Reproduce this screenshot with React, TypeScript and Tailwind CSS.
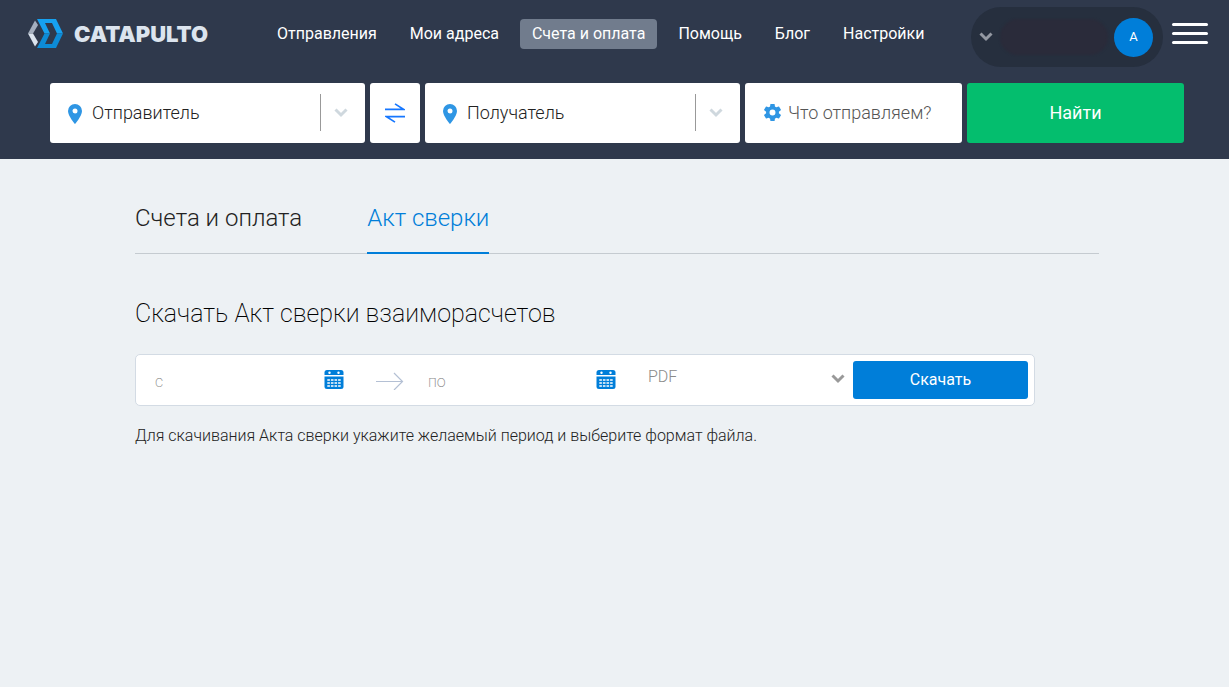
import { useState } from 'react'

type MenuItem = {
    title: string
    active?: boolean
}

const menu: MenuItem[] = [
    { title: 'Отправления' },
    { title: 'Мои адреса' },
    { title: 'Счета и оплата', active: true },
    { title: 'Помощь' },
    { title: 'Блог' },
    { title: 'Настройки' },
]

function Logo() {
    return (
        <a href="#" className="flex w-[237px] shrink-0 items-center gap-[11px] text-[#dce4ee]">
            <svg width="35" height="29" viewBox="0 0 35 29" aria-hidden="true">
                <path d="M7 1.5 L10 6 L5 14.5 L0 14.5 Z" fill="#a5afbe" />
                <path d="M0 14.5 L5 14.5 L10 23 L7 27.5 Z" fill="#dce4ee" />
                <path d="M9 0 H28 L35 14.5 H29 L24 4 H17 L22 14.5 H16.5 Z" fill="#16a1f0" />
                <path d="M35 14.5 L28 29 H9 L16.5 14.5 H22 L17 25 H24 L29 14.5 Z" fill="#0d8bd6" />
            </svg>
            <span className="font-['Inter',sans-serif] text-[22px] leading-6 font-black">CATAPULTO</span>
        </a>
    )
}

function Chevron({ className }: { className: string }) {
    return (
        <svg className={className} width="14" height="10" viewBox="0 0 14 10" fill="none" stroke="currentColor" strokeWidth="3" aria-hidden="true">
            <path d="M1.5 1.5 L7 7 L12.5 1.5" />
        </svg>
    )
}

function Calendar() {
    return (
        <svg width="20" height="20" viewBox="0 0 20 20" aria-hidden="true">
            <path d="M3 0 H17 Q19.5 0 19.5 2.5 V5 H0.5 V2.5 Q0.5 0 3 0 Z" fill="#007ed9" />
            <path d="M0.5 6.5 H19.5 V16.5 Q19.5 19 17 19 H3 Q0.5 19 0.5 16.5 Z" fill="#007ed9" />
            <circle cx="5.5" cy="2.7" r="1.2" fill="#fff" />
            <circle cx="14.5" cy="2.7" r="1.2" fill="#fff" />
            <path d="M3.3 10 H16.7 M3.3 13 H16.7 M3.3 16 H16.7" stroke="#fff" strokeWidth="1.7" strokeDasharray="2.6 1" />
        </svg>
    )
}

function PlaceField({ label }: { label: string }) {
    return (
        <div className="flex min-w-0 items-center rounded-[3px] bg-white pl-[18px]">
            <svg className="mt-px shrink-0" width="14" height="20" viewBox="0 0 14 20" aria-hidden="true">
                <path d="M7 0 A7 7 0 0 0 0 7 C0 12 7 20 7 20 S14 12 14 7 A7 7 0 0 0 7 0 Z M7 4.5 A2.5 2.5 0 1 1 7 9.5 A2.5 2.5 0 0 1 7 4.5 Z" fill="#2f96e4" />
            </svg>
            <input
                aria-label={label}
                placeholder={label}
                className="ml-[10px] h-[58px] min-w-0 flex-1 pb-[2px] text-[18px] font-light text-black outline-none placeholder:text-[#222]"
            />
            <button type="button" aria-label={'Выбрать: ' + label} className="mb-px flex h-[37px] w-[45px] shrink-0 items-center border-l border-[#999] pl-[13px] text-[#cfd8de]">
                <Chevron className="h-[10px] w-[14px]" />
            </button>
        </div>
    )
}

function Header() {
    return (
        <header className="bg-[#2f394c] pb-4 text-white">
            <div className="flex h-[83px] items-start pr-[21px] pl-7">
                <div className="shrink-0 pt-[19px]"><Logo /></div>
                <nav className="flex min-w-0 items-center gap-[9px] pt-[19px]">
                    {menu.map((item) => (
                        <a
                            key={item.title}
                            href="#"
                            className={'h-[30px] rounded-[4px] px-3 text-[16px] leading-[29px] whitespace-nowrap ' + (item.active ? 'bg-[#717c8d]' : '')}
                        >
                            {item.title}
                        </a>
                    ))}
                </nav>
                <button type="button" className="mt-[7px] ml-auto flex h-[60px] w-[192px] shrink-0 items-center justify-between rounded-full bg-[#262f3e] pr-[10px] pl-2">
                    <Chevron className="h-[10px] w-[14px] text-[#9398a2]" />
                    <span className="h-9 w-[108px] rounded-full bg-[#2a2b3a] blur-[1px]" />
                    <span className="flex size-[39px] items-center justify-center rounded-full bg-[#007ed9] text-[13px]">А</span>
                </button>
                <button type="button" aria-label="Меню" className="mt-[23px] ml-[9px] flex shrink-0 flex-col gap-[6px]">
                    <span className="h-[3px] w-9 rounded-full bg-white" />
                    <span className="h-[3px] w-9 rounded-full bg-white" />
                    <span className="h-[3px] w-9 rounded-full bg-white" />
                </button>
            </div>
            <form className="grid h-[60px] grid-cols-[315fr_50px_315fr_217fr_217fr] gap-[5px] pr-[45px] pl-[50px]">
                <PlaceField label="Отправитель" />
                <button type="button" aria-label="Поменять местами" className="flex items-center justify-center rounded-[3px] bg-white">
                    <svg width="20" height="20" viewBox="0 0 20 20" fill="none" stroke="#1677ff" strokeWidth="1.7" aria-hidden="true">
                        <path d="M0 6.3 H18.5 L10 0.9 M20 13.7 H1.5 L10 19.1" />
                    </svg>
                </button>
                <PlaceField label="Получатель" />
                <button type="button" className="flex items-center gap-[7px] rounded-[3px] bg-white pb-px pl-[19px] text-[18px] font-light whitespace-nowrap text-[#555]">
                    <svg width="17" height="17" viewBox="2 2 20 20" fill="#2f96e4" aria-hidden="true">
                        <path d="M19.5 13 a8 8 0 0 0 0-2 l2.2-1.7 a.5.5 0 0 0 .1-.7 l-2-3.5 a.5.5 0 0 0-.6-.2 l-2.6 1 a7.6 7.6 0 0 0-1.7-1 l-.4-2.7 a.5.5 0 0 0-.5-.4 h-4 a.5.5 0 0 0-.5.4 l-.4 2.7 a7.6 7.6 0 0 0-1.7 1 l-2.6-1 a.5.5 0 0 0-.6.2 l-2 3.5 a.5.5 0 0 0 .1.7 L4.5 11 a8 8 0 0 0 0 2 l-2.2 1.7 a.5.5 0 0 0-.1.7 l2 3.5 a.5.5 0 0 0 .6.2 l2.6-1 a7.6 7.6 0 0 0 1.7 1 l.4 2.7 a.5.5 0 0 0 .5.4 h4 a.5.5 0 0 0 .5-.4 l.4-2.7 a7.6 7.6 0 0 0 1.7-1 l2.6 1 a.5.5 0 0 0 .6-.2 l2-3.5 a.5.5 0 0 0-.1-.7 Z M12 15.5 a3.5 3.5 0 1 1 0-7 a3.5 3.5 0 0 1 0 7 Z" />
                    </svg>
                    Что отправляем?
                </button>
                <button type="submit" className="rounded-[3px] bg-[#04be6e] pb-px text-[18px]">Найти</button>
            </form>
        </header>
    )
}

export default function App() {
    const [format, setFormat] = useState('PDF')

    return (
        <div className="min-h-screen bg-[#edf1f4] font-['Roboto',sans-serif] text-black">
            <Header />
            <main className="pr-[130px] pl-[135px]">
                <nav className="flex gap-[65px] border-b border-[#c5cbd0] pt-[41px] text-[24px] leading-9 font-light">
                    <a href="#" className="pb-[17px] text-[#222]">Счета и оплата</a>
                    <a href="#" className="-mb-px border-b-2 border-[#007ed9] pb-4 text-[#007ed9]">Акт сверки</a>
                </nav>
                <h1 className="mt-[42px] text-[25px] leading-9 font-extralight">Скачать Акт сверки взаиморасчетов</h1>
                <form className="mt-[22px] flex h-[52px] max-w-[900px] items-center rounded-[5px] border border-[#d3dbe4] bg-white pr-[6px] pl-[19px]">
                    <input aria-label="с" placeholder="с" className="mt-[3px] h-10 w-[169px] min-w-0 text-[16px] font-extralight outline-none placeholder:text-[#888]" />
                    <button type="button" aria-label="Дата начала"><Calendar /></button>
                    <svg className="mr-6 ml-8 shrink-0" width="28" height="20" viewBox="0 0 28 20" fill="none" stroke="#b4c0d4" strokeWidth="1.2" aria-hidden="true">
                        <path d="M0 11.5 H26 M18 3 L26.5 11.5 L18 20" />
                    </svg>
                    <input aria-label="по" placeholder="по" className="mt-[3px] h-10 w-[168px] min-w-0 text-[16px] font-extralight outline-none placeholder:text-[#888]" />
                    <button type="button" aria-label="Дата окончания"><Calendar /></button>
                    <div className="grid flex-1 items-center pr-2 pl-8">
                        <select
                            aria-label="Формат файла"
                            value={format}
                            onChange={(e) => setFormat(e.target.value)}
                            className="col-start-1 row-start-1 h-10 appearance-none pb-[6px] text-[16px] font-light text-[#8a8a8a] outline-none"
                        >
                            <option>PDF</option>
                            <option>XLS</option>
                        </select>
                        <Chevron className="pointer-events-none col-start-1 row-start-1 mb-[2px] justify-self-end text-[#999]" />
                    </div>
                    <button type="submit" className="h-[38px] w-[175px] shrink-0 rounded-[3px] bg-[#007ed9] text-[16px] text-white">Скачать</button>
                </form>
                <p className="mt-[18px] text-[16px] leading-6 font-light text-[#222]">Для скачивания Акта сверки укажите желаемый период и выберите формат файла.</p>
            </main>
        </div>
    )
}
